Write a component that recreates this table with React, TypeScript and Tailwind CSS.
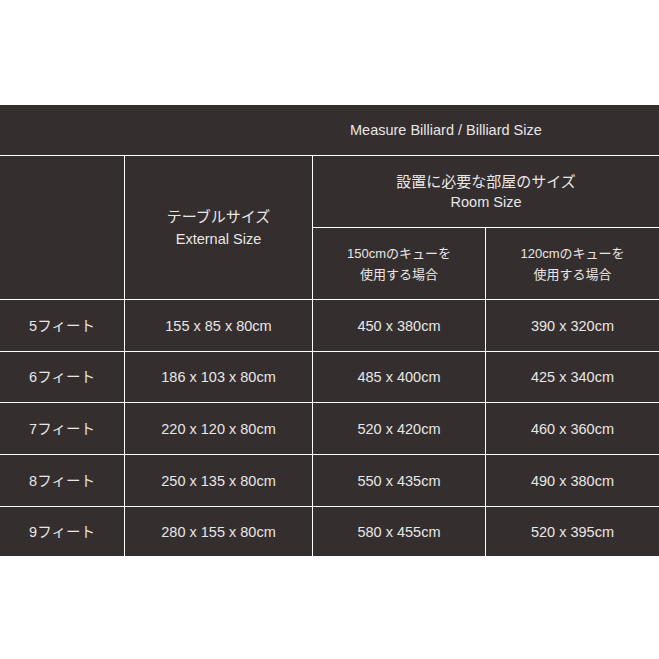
const rows = [
  ['5フィート', '155 x 85 x 80cm', '450 x 380cm', '390 x 320cm'],
  ['6フィート', '186 x 103 x 80cm', '485 x 400cm', '425 x 340cm'],
  ['7フィート', '220 x 120 x 80cm', '520 x 420cm', '460 x 360cm'],
  ['8フィート', '250 x 135 x 80cm', '550 x 435cm', '490 x 380cm'],
  ['9フィート', '280 x 155 x 80cm', '580 x 455cm', '520 x 395cm'],
];

const cell = 'bg-[#342e2e] flex flex-col items-center justify-center text-center';

export default function App() {
  return (
    <div
      className="w-[659px] h-[659px] bg-white pt-[105px] text-[#e8e6e6] text-[14.5px]"
      style={{ fontFamily: '"Liberation Sans", Arial, "Noto Sans CJK JP", sans-serif' }}
    >
      <div className="grid grid-cols-[124px_187px_172px_173px] grid-rows-[50px_71px_71px_51px_50px_51px_51px_49px] gap-px bg-white">
        {/* title */}
        <div className="col-span-4 bg-[#342e2e] flex items-center pl-[350px] pt-px">
          Measure Billiard / Billiard Size
        </div>

        <div className="row-span-2 bg-[#342e2e]" />
        <div className={`row-span-2 ${cell} leading-[22px]`}>
          <span className="text-[15px]">テーブルサイズ</span>
          <span>External Size</span>
        </div>
        <div className={`col-span-2 ${cell} leading-[21px]`}>
          <span className="text-[15px]">設置に必要な部屋のサイズ</span>
          <span>Room Size</span>
        </div>
        <div className={`${cell} text-[13px] leading-[21px]`}>
          <span>150cmのキューを</span>
          <span>使用する場合</span>
        </div>
        <div className={`${cell} text-[13px] leading-[21px]`}>
          <span>120cmのキューを</span>
          <span>使用する場合</span>
        </div>

        {rows.map((r) =>
          r.map((v, i) => (
            <div key={r[0] + i} className={`${cell} pt-[2px]`}>
              {v}
            </div>
          ))
        )}
      </div>
    </div>
  );
}
